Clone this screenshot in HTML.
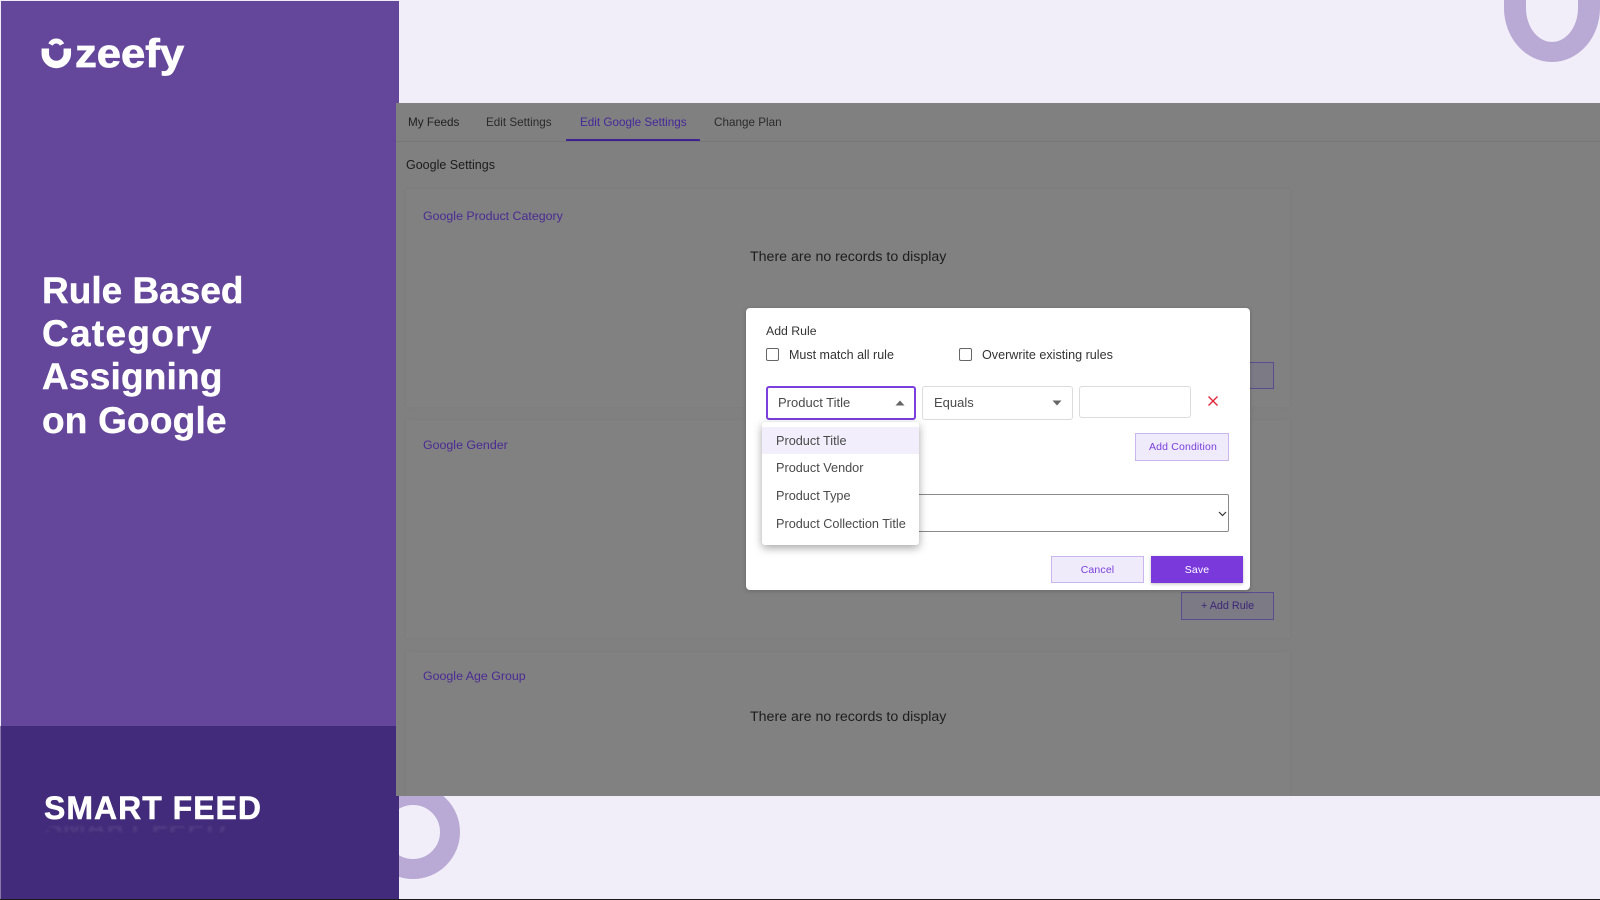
<!DOCTYPE html>
<html lang="en">
<head>
<meta charset="utf-8">
<title>Ozeefy Smart Feed</title>
<style>
*{box-sizing:border-box;margin:0;padding:0}
html,body{width:1600px;height:900px;overflow:hidden;background:#f1eefa;font-family:"Liberation Sans",sans-serif}
.a{position:absolute}
.t{position:absolute;white-space:nowrap;line-height:20px;filter:blur(.25px)}
.h{position:absolute;left:42px;color:#fff;font-weight:700;font-size:37px;line-height:44px;white-space:nowrap;-webkit-text-stroke:.4px #fff;filter:blur(.3px)}
.card{position:absolute;left:10px;width:884px;background:#818181;box-shadow:0 0 3px #7c7c7c}
.item{position:absolute;left:14px;font-size:12.7px;color:#4a4a4a;line-height:20px;white-space:nowrap;filter:blur(.25px)}
</style>
</head>
<body>
<svg class="a" style="left:1500px;top:0" width="100" height="66" viewBox="0 0 100 66">
  <path fill="#b9a9d5" d="M4 0V8A48 54 0 0 0 100 8V0H78V8A26 34 0 0 1 26 8V0Z"/>
</svg>
<div class="a" style="left:366px;top:785px;width:94px;height:94px;border-radius:50%;border:20px solid #b9a9d5"></div>

<div class="a" style="left:0;top:0;width:399px;height:726px;background:#64469b;border-left:1px solid #efeaf7;border-top:1px solid #efeaf7"></div>
<div class="a" style="left:0;top:726px;width:399px;height:173px;background:#422b7a;border-left:1px solid #8a78a8"></div>
<div class="a" style="left:0;top:899px;width:1600px;height:1px;background:#1a1a1a"></div>

<svg class="a" style="left:40px;top:36px" width="34" height="34" viewBox="0 0 34 34">
  <path d="M5.300 12.500V17.500a11 11 0 0 0 22 0V12.500" fill="none" stroke="#fff" stroke-width="7.500"/>
  <path d="M10.500 8.500A6.500 6.500 0 0 1 22 8.500" fill="none" stroke="#fff" stroke-width="5"/>
</svg>
<div class="t" style="left:75px;top:26.500px;font-size:40px;line-height:54px;font-weight:700;color:#fff;-webkit-text-stroke:.8px #fff;transform:scaleX(1.09);transform-origin:left">zeefy</div>

<div class="h" style="top:269px">Rule Based</div>
<div class="h" style="top:312px;letter-spacing:1.3px">Category</div>
<div class="h" style="top:355px;letter-spacing:.2px">Assigning</div>
<div class="h" style="top:399px;letter-spacing:.2px">on Google</div>

<div class="t" style="left:44px;top:790px;font-size:32px;line-height:36px;font-weight:700;color:#fff;letter-spacing:1px;-webkit-text-stroke:.5px #fff">SMART FEED</div>
<div class="a" style="left:44px;top:826px;width:190px;height:6px;overflow:hidden;opacity:.07;filter:blur(1px)">
  <div style="color:#fff;font-size:28px;font-weight:700;line-height:14px;margin-top:-6px;white-space:nowrap">SMART FEED</div>
</div>

<div class="a" style="left:396px;top:103px;width:1204px;height:693px;background:#808080"></div>
<div class="a" style="left:396px;top:141px;width:1204px;height:1px;background:#767676"></div>
<div class="t" style="left:408px;top:113px;font-size:11.700px;color:#1f1f1f">My Feeds</div>
<div class="t" style="left:486px;top:113px;font-size:11.700px;color:#2a2a2a">Edit Settings</div>
<div class="t" style="left:580px;top:113px;font-size:11.700px;color:#45289a">Edit Google Settings</div>
<div class="t" style="left:714px;top:113px;font-size:11.700px;color:#2a2a2a">Change Plan</div>
<div class="a" style="left:566px;top:139px;width:134px;height:2px;background:#3f2390"></div>
<div class="t" style="left:406px;top:155px;font-size:12.500px;color:#1c1c1c">Google Settings</div>

<div class="a" style="left:396px;top:103px;width:1204px;height:693px;overflow:hidden">
  <div class="card" style="top:86px;height:218px"></div>
  <div class="card" style="top:317px;height:218px"></div>
  <div class="card" style="top:549px;height:160px"></div>
</div>

<div class="t" style="left:423px;top:206px;font-size:12.400px;color:#4a2a94">Google Product Category</div>
<div class="t" style="left:750px;top:246.500px;font-size:14.200px;color:#1d1d1d">There are no records to display</div>
<div class="t" style="left:423px;top:435px;font-size:12.400px;color:#4a2a94">Google Gender</div>
<div class="t" style="left:423px;top:666px;font-size:12.400px;color:#4a2a94">Google Age Group</div>
<div class="t" style="left:750px;top:707px;font-size:14.200px;color:#1d1d1d">There are no records to display</div>

<div class="a" style="left:1181px;top:362px;width:93px;height:27px;background:#7b7a85;border:1px solid #5b4c92"></div>
<div class="a" style="left:1181px;top:592px;width:93px;height:28px;background:#7b7a85;border:1px solid #5b4c92"></div>
<div class="t" style="left:1201px;top:596px;font-size:10.800px;color:#3d2678">+ Add Rule</div>

<!-- modal -->
<div class="a" style="left:746px;top:308px;width:504px;height:282px;background:#fff;border-radius:4px;box-shadow:0 1px 4px rgba(0,0,0,.2)"></div>
<div class="t" style="left:766px;top:320.500px;font-size:12.300px;color:#333">Add Rule</div>

<div class="a" style="left:766px;top:348px;width:13px;height:13px;border:1.500px solid #666;border-radius:2px"></div>
<div class="t" style="left:789px;top:344.500px;font-size:12.500px;color:#333">Must match all rule</div>
<div class="a" style="left:959px;top:348px;width:13px;height:13px;border:1.500px solid #666;border-radius:2px"></div>
<div class="t" style="left:982px;top:344.500px;font-size:12.600px;color:#333">Overwrite existing rules</div>

<div class="a" style="left:766px;top:386px;width:150px;height:34px;border:2px solid #7a3fdc;border-radius:3px"></div>
<div class="t" style="left:778px;top:393px;font-size:13px;color:#4a4a4a">Product Title</div>
<svg class="a" style="left:895px;top:400px" width="10" height="6"><path d="M0.500 5.500L5 .5l4.500 5z" fill="#666"/></svg>

<div class="a" style="left:922px;top:386px;width:151px;height:34px;border:1px solid #dcdcdc;border-radius:3px"></div>
<div class="t" style="left:934px;top:393px;font-size:13px;color:#4a4a4a">Equals</div>
<svg class="a" style="left:1052px;top:400px" width="10" height="6"><path d="M.5 .5L5 5.500 9.500 .5z" fill="#666"/></svg>

<div class="a" style="left:1079px;top:386px;width:112px;height:32px;border:1px solid #dcdcdc;border-radius:3px"></div>
<svg class="a" style="left:1207px;top:395px" width="12" height="12" viewBox="0 0 12 12"><path d="M1.500 1.500l9 9M10.500 1.500l-9 9" stroke="#e0283a" stroke-width="1.400" fill="none"/></svg>

<div class="a" style="left:1135px;top:433px;width:94px;height:28px;background:#efebfa;border:1px solid #c9b6ef"></div>
<div class="t" style="left:1136px;top:437px;width:94px;text-align:center;font-size:10.500px;color:#7a3fdc;letter-spacing:.15px">Add Condition</div>

<div class="a" style="left:900px;top:494px;width:329px;height:38px;border:1px solid #8a8a8a;border-left:none;border-radius:0 2px 2px 0"></div>
<svg class="a" style="left:1218px;top:511px" width="9" height="6"><path d="M1 1l3.500 3.500L8 1" stroke="#333" stroke-width="1.200" fill="none"/></svg>

<div class="a" style="left:762px;top:422px;width:157px;height:123px;background:#fff;border-radius:3px;box-shadow:0 3px 9px rgba(0,0,0,.35)">
  <div class="a" style="left:0;top:5px;width:157px;height:27px;background:#f2eefb"></div>
  <div class="item" style="top:9px">Product Title</div>
  <div class="item" style="top:36px">Product Vendor</div>
  <div class="item" style="top:64px">Product Type</div>
  <div class="item" style="top:92px">Product Collection Title</div>
</div>

<div class="a" style="left:1051px;top:556px;width:93px;height:27px;background:#efebfa;border:1px solid #c9b6ef"></div>
<div class="t" style="left:1051px;top:560px;width:93px;text-align:center;font-size:10.500px;color:#7a3fdc;letter-spacing:.15px">Cancel</div>
<div class="a" style="left:1151px;top:556px;width:92px;height:27px;background:#7a3adb;box-shadow:0 1px 3px rgba(0,0,0,.25)"></div>
<div class="t" style="left:1151px;top:560px;width:92px;text-align:center;font-size:10.500px;color:#fff;letter-spacing:.15px">Save</div>
</body>
</html>
